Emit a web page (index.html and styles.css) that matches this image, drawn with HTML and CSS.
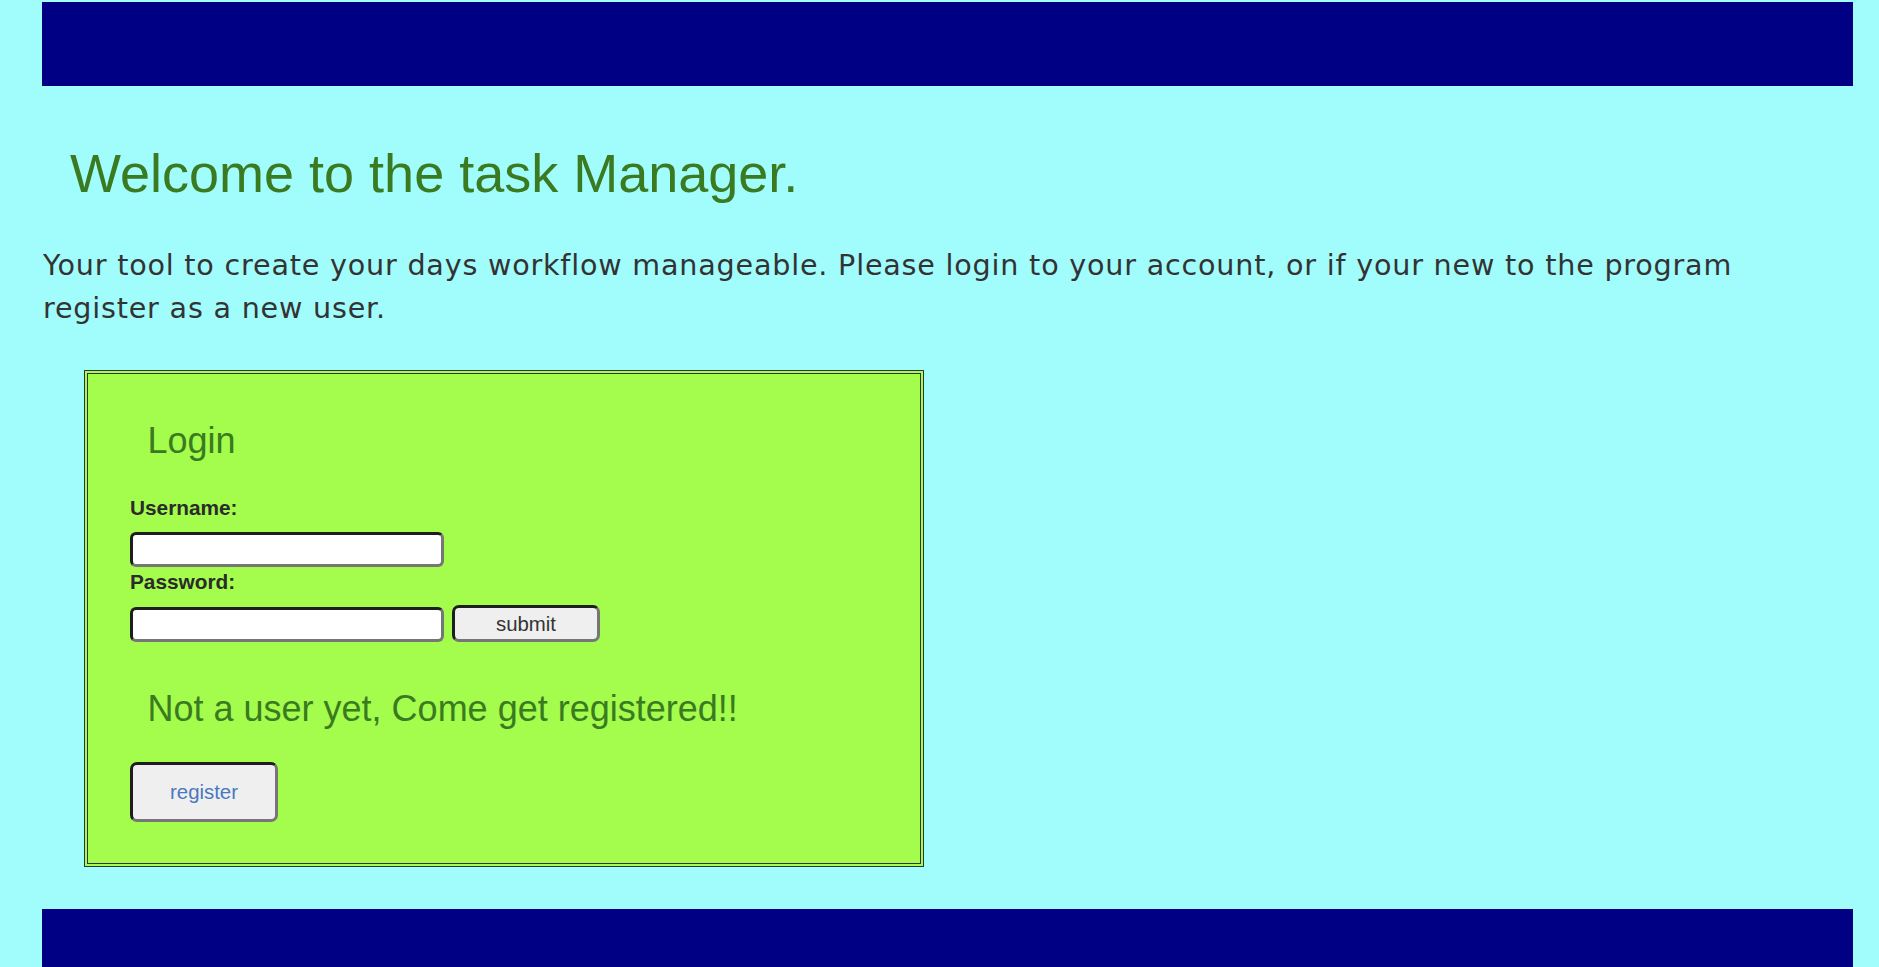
FILE: index.html
```html
<!DOCTYPE html>
<html lang="en">
<head>
<meta charset="utf-8">
<title>Task Manager</title>
<link rel="stylesheet" href="styles.css">
</head>
<body>
<header class="topbar"></header>
<main class="content">
  <h1 class="title">Welcome to the task Manager.</h1>
  <p class="intro">Your tool to create your days workflow manageable. Please login to your account, or if your new to the program register as a new user.</p>
  <section class="panel">
    <h2 class="panel-heading">Login</h2>
    <form class="login-form">
      <label class="field-label" for="username">Username:</label>
      <input class="text-input" id="username" type="text">
      <label class="field-label label-password" for="password">Password:</label>
      <div class="pw-row">
        <input class="text-input" id="password" type="password">
        <button class="btn btn-submit" type="button">submit</button>
      </div>
    </form>
    <h2 class="panel-heading heading-register">Not a user yet, Come get registered!!</h2>
    <button class="btn btn-register" type="button">register</button>
  </section>
</main>
<footer class="bottombar"></footer>
</body>
</html>
```

FILE: styles.css
```css
html {
  overflow: hidden;
  background: #a1fcfc;
}

body {
  margin: 2px 26px 0 42px;
  background: #a1fcfc;
  font-family: "Liberation Sans", Arial, sans-serif;
}

.topbar {
  height: 84px;
  background: #000084;
}

.content {
  display: flex;
  flex-direction: column;
  align-items: flex-start;
}

.title {
  margin: 56px 0 0 28px;
  font-family: "Liberation Sans", Arial, sans-serif;
  font-weight: normal;
  font-size: 54px;
  line-height: 62px;
  color: #3a7a20;
}

.intro {
  margin: 40px 0 0 1px;
  font-family: "DejaVu Sans", Verdana, sans-serif;
  font-size: 28.6px;
  letter-spacing: 0.8px;
  line-height: 42.5px;
  color: #333333;
}

.panel {
  margin: 41px 0 0 42px;
  border: 4px double #333333;
  background: #a4fc4c;
  padding: 46px 0 0 42px;
  box-sizing: content-box;
  width: 790px;
  height: 443px;
  display: flex;
  flex-direction: column;
  align-items: flex-start;
}

.panel-heading {
  margin: 0 0 0 17.5px;
  font-family: "Liberation Sans", Arial, sans-serif;
  font-weight: normal;
  font-size: 36px;
  line-height: 42px;
  color: #3a7a20;
}

.login-form {
  display: flex;
  flex-direction: column;
  align-items: flex-start;
  margin-top: 34px;
}

.field-label {
  font-family: "Liberation Sans", Arial, sans-serif;
  font-weight: bold;
  font-size: 20.8px;
  line-height: 24px;
  color: #2b2b2b;
  margin-bottom: 12px;
}

.label-password {
  margin-top: 3px;
  margin-bottom: 11px;
}

.text-input {
  box-sizing: border-box;
  width: 314px;
  height: 35px;
  margin: 0;
  padding: 0 6px;
  background: #ffffff;
  border: 3px solid;
  border-color: #1e1e1e #767676 #767676 #1e1e1e;
  border-radius: 6px;
  font-size: 18px;
}

.pw-row {
  display: flex;
  align-items: flex-end;
  gap: 8px;
}

.btn {
  box-sizing: border-box;
  margin: 0;
  padding: 0;
  background: #efefef;
  border: 3px solid;
  border-color: #1e1e1e #767676 #767676 #1e1e1e;
  border-radius: 7px;
  font-family: "Liberation Sans", Arial, sans-serif;
  font-size: 20.4px;
}

.btn-submit {
  width: 148px;
  height: 37px;
  padding-top: 2px;
  color: #333333;
}

.heading-register {
  margin-top: 46px;
}

.btn-register {
  margin-top: 32px;
  width: 148px;
  height: 60px;
  color: #4a78c0;
}

.bottombar {
  margin-top: 42px;
  height: 58px;
  background: #000084;
}
```
